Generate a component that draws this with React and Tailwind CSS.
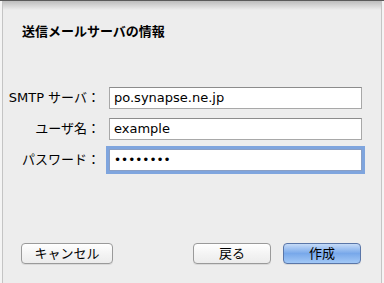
const font = { fontFamily: '"DejaVu Sans", "Noto Sans CJK JP", sans-serif' }

const Field = ({ label, value, focused, password }) => (
  <div className="flex items-center h-[21px]">
    <label className="w-[98px] text-right text-[13px] text-black pr-[1px]">{label}</label>
    <div
      className={
        focused
          ? 'ml-[8px] w-[253px] h-[22px] bg-white border border-[#8a9fc4] ring-[3px] ring-[#7fa5de] flex items-center pl-[4px]'
          : 'ml-[8px] w-[253px] h-[22px] bg-white border border-[#a8a8a8] border-t-[#8c8c8c] flex items-center pl-[4px]'
      }
    >
      {password ? (
        <span className="text-[12px] leading-none text-black">{'••••••••'}</span>
      ) : (
        <span className="text-[13px] text-black">{value}</span>
      )}
    </div>
  </div>
)

const Button = ({ children, primary, className }) => (
  <button
    className={
      (primary
        ? 'bg-gradient-to-b from-[#c6dbf7] via-[#78a8ea] to-[#a2c8f6] border-[#5a76a8] '
        : 'bg-gradient-to-b from-[#ffffff] via-[#f4f4f4] to-[#ececec] border-[#9a9a9a] ') +
      'h-[21px] rounded-[4px] border text-[13px] text-black flex items-center justify-center shadow-[0_1px_0_rgba(0,0,0,0.08)] ' +
      className
    }
  >
    {children}
  </button>
)

export default function App() {
  return (
    <div className="w-[384px] h-[283px] bg-[#f6f6f6] flex flex-col overflow-hidden" style={font}>
      <div className="h-[1px] bg-[#5a5a5a]" />
      <div className="flex flex-1">
        <div className="w-[2px] bg-[#f4f4f4]" />
        <div className="flex-1 bg-[#ededed] border-l border-r border-[#c4c4c4] flex flex-col relative">
          <div className="absolute top-0 left-0 right-0 h-[9px] bg-gradient-to-b from-[#bdbdbd] to-[#ededed]" />
          <h1 className="mt-[22px] ml-[19px] text-[13px] font-bold text-black leading-[16px]" style={{ fontFamily: '"Noto Sans CJK JP", sans-serif' }}>
            送信メールサーバの情報
          </h1>
          <div className="mt-[48px] flex flex-col gap-[10px]">
            <Field label="SMTP サーバ：" value="po.synapse.ne.jp" />
            <Field label="ユーザ名：" value="example" />
            <Field label="パスワード：" focused password />
          </div>
          <div className="mt-[73px] flex items-center">
            <Button className="ml-[18px] w-[92px]">キャンセル</Button>
            <Button className="ml-[80px] w-[78px]">戻る</Button>
            <Button primary className="ml-[12px] w-[78px]">作成</Button>
          </div>
        </div>
        <div className="w-[2px] bg-[#f4f4f4]" />
      </div>
    </div>
  )
}
